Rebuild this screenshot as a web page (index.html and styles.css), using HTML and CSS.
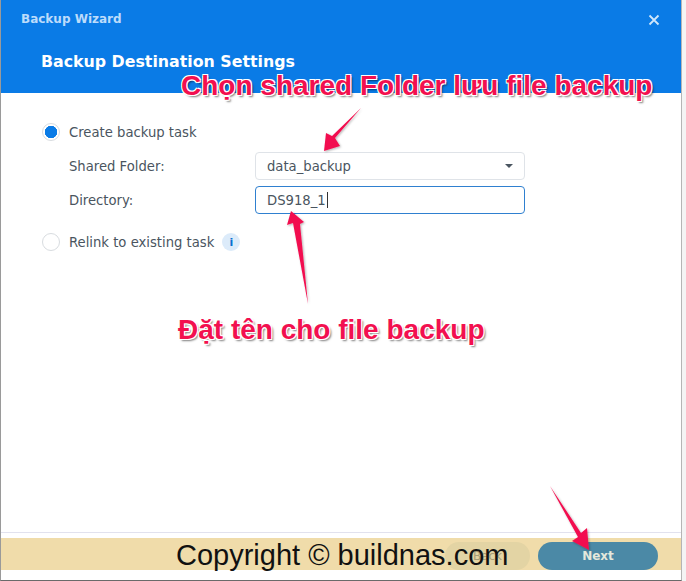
FILE: index.html
```html
<!DOCTYPE html>
<html lang="en">
<head>
<meta charset="utf-8">
<title>Backup Wizard</title>
<link rel="stylesheet" href="styles.css">
</head>
<body>
<div class="window">
  <header class="header">
    <div class="titlebar">
      <span class="app-title">Backup Wizard</span>
      <svg class="close" width="12" height="12" viewBox="0 0 12 12"><path d="M1.5 1.5l9 9M10.500 1.500l-9 9" stroke="#cfe6fb" stroke-width="1.800" fill="none"/></svg>
    </div>
    <h1 class="page-title">Backup Destination Settings</h1>
  </header>
  <main class="content">
    <div class="radio-row">
      <span class="radio radio-on"></span>
      <span class="label">Create backup task</span>
    </div>
    <div class="field">
      <span class="label field-label">Shared Folder:</span>
      <div class="input select"><span>data_backup</span><span class="caret"></span></div>
    </div>
    <div class="field">
      <span class="label field-label">Directory:</span>
      <div class="input input-focus"><span>DS918_1</span><span class="cursor"></span></div>
    </div>
    <div class="radio-row relink">
      <span class="radio"></span>
      <span class="label">Relink to existing task</span>
      <span class="info">i</span>
    </div>
  </main>
  <footer class="footer">
    <div class="band">
      <button class="btn btn-back">Back</button>
      <button class="btn btn-next">Next</button>
    </div>
  </footer>
</div>
<div class="note note-top">Chọn shared Folder lưu file backup</div>
<div class="note note-mid">Đặt tên cho file backup</div>
<div class="copyright">Copyright © buildnas.com</div>
<svg class="arrows" width="686" height="581" viewBox="0 0 686 581">
  <defs><filter id="s" x="-30%" y="-30%" width="160%" height="160%"><feDropShadow dx="1" dy="1" stdDeviation="1" flood-color="#000" flood-opacity=".3"/></filter></defs>
  <g fill="#f2104f" filter="url(#s)">
    <polygon points="361,108 335,138 340,146 324,151 326,133 332,136"/>
    <polygon points="308,304 300,224 304,222 291,211 287,225 293,223"/>
    <polygon points="550,486 581,533 587,528 589,550 572,541 578,537"/>
  </g>
</svg>
</body>
</html>
```
FILE: styles.css
```css
* { box-sizing: border-box; }
html, body { margin: 0; height: 100%; }
body {
  width: 686px;
  height: 581px;
  background: #f4f4f4;
  font-family: "DejaVu Sans", sans-serif;
  overflow: hidden;
  position: relative;
}
.window {
  width: 682px;
  height: 581px;
  background: #fff;
  border-left: 1px solid #9a9a9a;
  border-right: 1px solid #b5b5b5;
  border-bottom: 1px solid #6a6a6a;
  display: flex;
  flex-direction: column;
}
.header {
  height: 93px;
  background: #0a7be6;
  padding: 12px 20px 0 20px;
}
.titlebar {
  display: flex;
  justify-content: space-between;
  align-items: center;
  height: 14px;
}
.app-title {
  font-size: 12px;
  font-weight: 700;
  color: #bcdcfb;
}
.close { margin-right: 1px; margin-top: 1px; }
.page-title {
  margin: 26px 0 0 20px;
  font-size: 15.800px;
  line-height: 20px;
  font-weight: 700;
  color: #fff;
}
.content {
  flex: 1;
  padding: 29px 0 0 41px;
}
.label {
  font-size: 13.200px;
  color: #4a5560;
}
.radio-row {
  display: flex;
  align-items: center;
  height: 20px;
  gap: 9px;
}
.radio {
  width: 18px;
  height: 18px;
  border-radius: 50%;
  border: 1px solid #d8dce0;
  background: #fff;
  flex: none;
}
.radio-on {
  background: radial-gradient(circle, #0a7be6 0 6px, #fff 6.500px);
}
.field {
  display: flex;
  align-items: center;
  height: 28px;
  margin-top: 10px;
  padding-left: 27px;
}
.field + .field { margin-top: 6px; }
.field-label { width: 186px; }
.input {
  width: 270px;
  height: 28px;
  border: 1px solid #dfe3e8;
  border-radius: 4px;
  padding: 0 11px;
  display: flex;
  align-items: center;
  font-size: 13.200px;
  color: #4a5560;
}
.input-focus { border: 1px solid #2f80d0; }
.select { justify-content: space-between; padding-right: 11px; }
.caret {
  width: 0;
  height: 0;
  border-left: 4px solid transparent;
  border-right: 4px solid transparent;
  border-top: 4px solid #4a5560;
}
.cursor {
  width: 1px;
  height: 16px;
  margin-left: 1px;
  background: #333;
}
.relink { margin-top: 18px; }
.info {
  width: 18px;
  height: 18px;
  margin-left: -1px;
  border-radius: 50%;
  background: #dcebfa;
  color: #0a6fd0;
  font-size: 11px;
  font-weight: 700;
  display: flex;
  align-items: center;
  justify-content: center;
}
.footer {
  height: 48px;
  border-top: 1px solid #e2e2ee;
  padding-top: 5px;
}
.band {
  height: 32px;
  background: #f0dcaa;
  display: flex;
  justify-content: flex-end;
  align-items: flex-end;
  gap: 8px;
  padding: 0 23px 0 0;
}
.btn {
  height: 28px;
  border: 0;
  border-radius: 14px;
  font-family: "DejaVu Sans", sans-serif;
  font-size: 12px;
  font-weight: 700;
  padding: 0;
}
.btn-back {
  width: 85px;
  background: #e3d4a4;
  color: #a89c78;
  font-weight: 400;
}
.btn-next {
  width: 120px;
  background: #4b89a6;
  color: #e4e8dc;
}
.note, .copyright { position: absolute; white-space: nowrap; }
.note {
  font-family: "Liberation Sans", sans-serif;
  font-weight: 700;
  color: #f2104f;
  text-shadow: 1px 1px 0 #fff, -1px -1px 0 #fff, 1px -1px 0 #fff, -1px 1px 0 #fff, 2px 2px 2px rgba(0,0,0,.5);
}
.note-top { left: 181px; top: 69px; font-size: 28px; line-height: 34px; }
.note-mid { left: 178px; top: 313px; font-size: 28px; line-height: 34px; }
.copyright {
  left: 176px;
  top: 537px;
  font-family: "Liberation Sans", sans-serif;
  font-size: 29px;
  line-height: 36px;
  color: #111;
}
.arrows { position: absolute; left: 0; top: 0; pointer-events: none; }
```
